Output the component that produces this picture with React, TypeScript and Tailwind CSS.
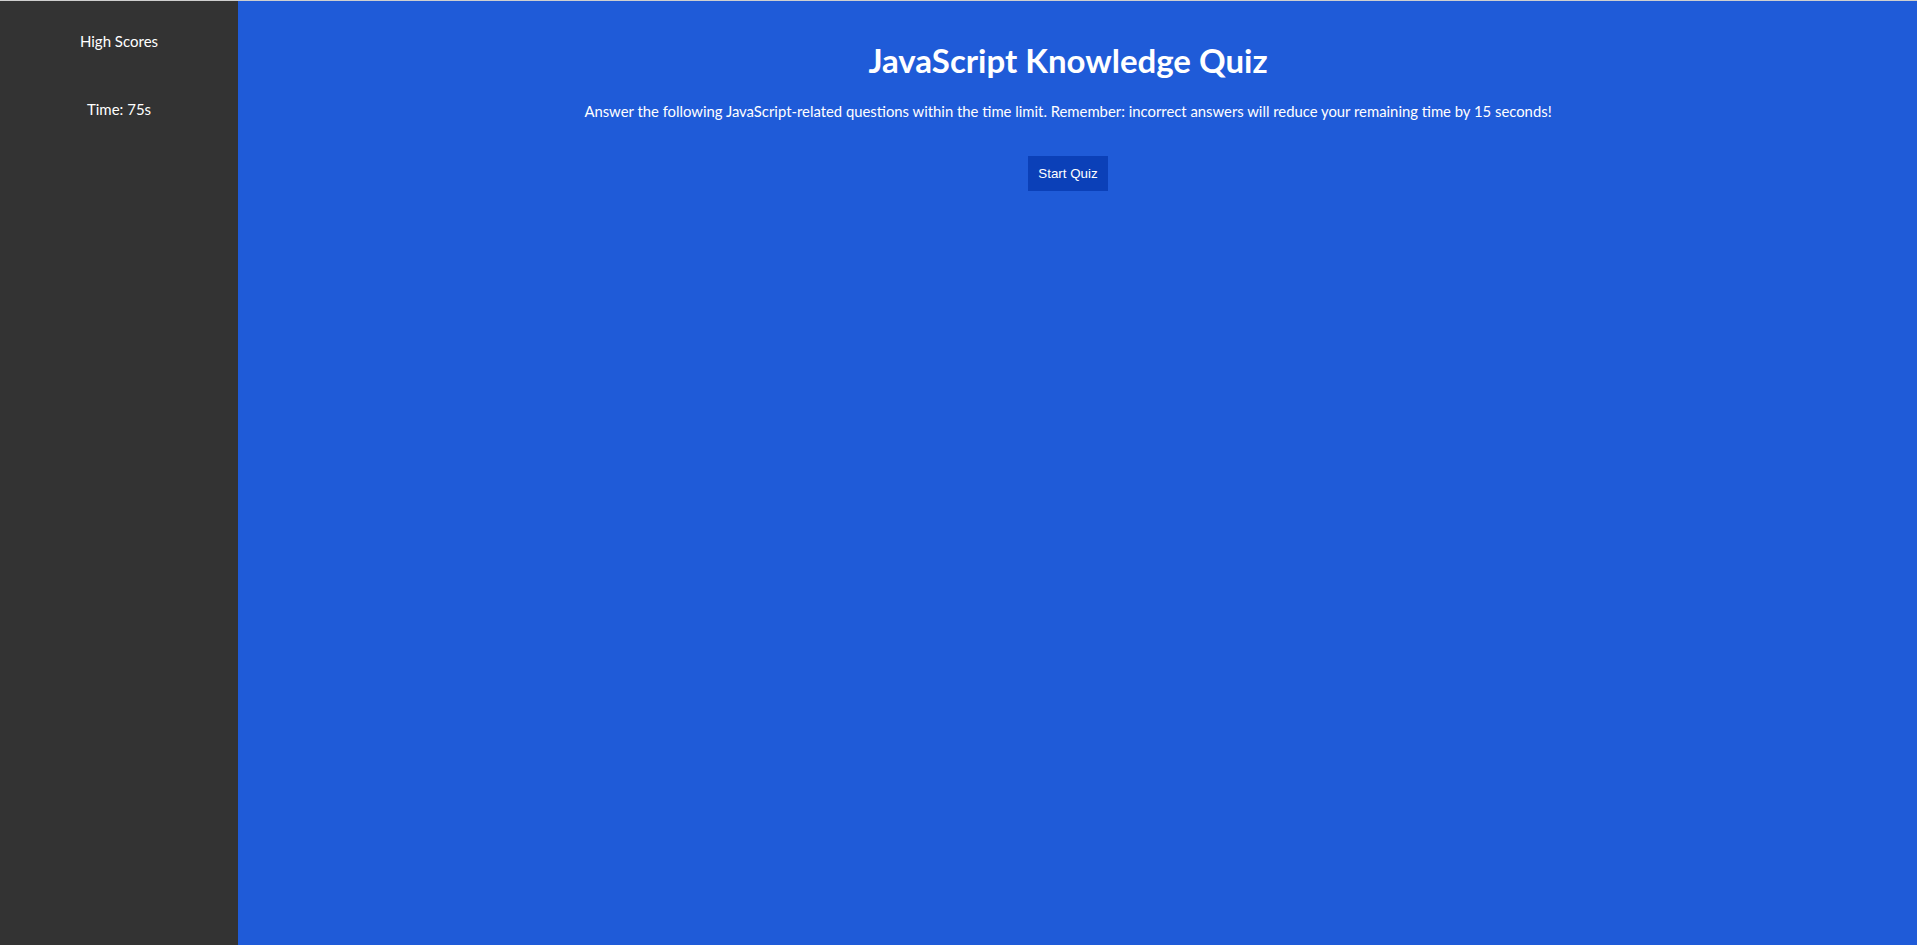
export default function App() {
    return (
        <div className="min-h-screen w-full flex flex-col bg-[#1f5bd8] border-t border-[#cfcfcf]" style={{ height: 945 }}>
            <div className="flex flex-1 font-['Lato','Open_Sans',sans-serif] text-white">
                <aside className="w-[238px] shrink-0 bg-[#333333] flex flex-col items-center pt-[28px] gap-[44px] text-[15px] leading-[24px]">
                    <a className="cursor-pointer">High Scores</a>
                    <div>Time: 75s</div>
                </aside>
                <main className="flex-1 flex flex-col items-center pr-[19px] pt-[39px]">
                    <h1 className="text-[33px] leading-[40px] font-bold">JavaScript Knowledge Quiz</h1>
                    <p className="mt-[19px] text-[14.85px] leading-[24px]">
                        Answer the following JavaScript-related questions within the time limit. Remember: incorrect answers will reduce your remaining time by 15 seconds!
                    </p>
                    <button className="mt-[33px] w-[80px] h-[35px] bg-[#0b40b8] text-white text-[13.33px] font-['Liberation_Sans',Arial,sans-serif]">
                        Start Quiz
                    </button>
                </main>
            </div>
        </div>
    );
}
